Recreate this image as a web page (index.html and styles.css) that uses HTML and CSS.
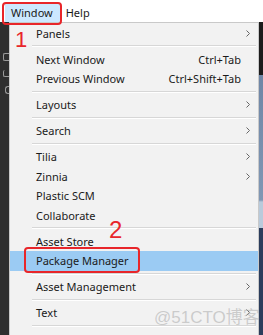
FILE: index.html
```html
<!DOCTYPE html>
<html>
<head>
    <title>Window menu</title>
    <link rel="stylesheet" href="styles.css">
</head>
<body>
    <div class="screen">
        <div class="menubar">
            <span class="top-item active">Window</span>
            <span class="top-item">Help</span>
        </div>
        <div class="body">
            <div class="side-left">
                <i class="frag frag-a"></i>
                <i class="frag frag-b"></i>
                <i class="frag frag-c"></i>
            </div>
            <div class="menu">
                <div class="item"><span class="label">Panels</span><span class="arrow"><svg width="4" height="7" viewBox="0 0 4 7"><path d="M0.5 0.5 L3.5 3.5 L0.5 6.5" fill="none" stroke="#666" stroke-width="1"/></svg></span></div>
                <div class="sep"></div>
                <div class="item"><span class="label">Next Window</span><span class="shortcut">Ctrl+Tab</span><span class="arrow"></span></div>
                <div class="item"><span class="label">Previous Window</span><span class="shortcut">Ctrl+Shift+Tab</span><span class="arrow"></span></div>
                <div class="sep"></div>
                <div class="item"><span class="label">Layouts</span><span class="arrow"><svg width="4" height="7" viewBox="0 0 4 7"><path d="M0.5 0.5 L3.5 3.5 L0.5 6.5" fill="none" stroke="#666" stroke-width="1"/></svg></span></div>
                <div class="sep"></div>
                <div class="item"><span class="label">Search</span><span class="arrow"><svg width="4" height="7" viewBox="0 0 4 7"><path d="M0.5 0.5 L3.5 3.5 L0.5 6.5" fill="none" stroke="#666" stroke-width="1"/></svg></span></div>
                <div class="sep"></div>
                <div class="item"><span class="label">Tilia</span><span class="arrow"><svg width="4" height="7" viewBox="0 0 4 7"><path d="M0.5 0.5 L3.5 3.5 L0.5 6.5" fill="none" stroke="#666" stroke-width="1"/></svg></span></div>
                <div class="item"><span class="label">Zinnia</span><span class="arrow"><svg width="4" height="7" viewBox="0 0 4 7"><path d="M0.5 0.5 L3.5 3.5 L0.5 6.5" fill="none" stroke="#666" stroke-width="1"/></svg></span></div>
                <div class="item"><span class="label">Plastic SCM</span><span class="arrow"></span></div>
                <div class="item"><span class="label">Collaborate</span><span class="arrow"></span></div>
                <div class="sep"></div>
                <div class="item"><span class="label">Asset Store</span><span class="arrow"></span></div>
                <div class="item selected"><span class="label">Package Manager</span><span class="arrow"></span></div>
                <div class="sep"></div>
                <div class="item"><span class="label">Asset Management</span><span class="arrow"><svg width="4" height="7" viewBox="0 0 4 7"><path d="M0.5 0.5 L3.5 3.5 L0.5 6.5" fill="none" stroke="#666" stroke-width="1"/></svg></span></div>
                <div class="sep"></div>
                <div class="item"><span class="label">Text</span><span class="arrow"><svg width="4" height="7" viewBox="0 0 4 7"><path d="M0.5 0.5 L3.5 3.5 L0.5 6.5" fill="none" stroke="#666" stroke-width="1"/></svg></span></div>
                <div class="sep"></div>
                <div class="item"><span class="label">TextMesh Pro</span><span class="arrow"><svg width="4" height="7" viewBox="0 0 4 7"><path d="M0.5 0.5 L3.5 3.5 L0.5 6.5" fill="none" stroke="#666" stroke-width="1"/></svg></span></div>
            </div>
            <div class="side-right"></div>
        </div>

        <!-- annotations drawn over the screenshot -->
        <div class="mark mark-window"></div>
        <div class="mark mark-package"></div>
        <span class="step step-1">1</span>
        <span class="step step-2">2</span>
        <span class="watermark">@51CTO博客</span>
    </div>
</body>
</html>
```

FILE: styles.css
```css
body {
    margin: 0;
    padding: 0;
    font-family: "Noto Sans", "Liberation Sans", sans-serif;
    font-size: 11px;
    color: #1a1a1a;
    background-color: #fff;
}
.screen {
    position: relative;
    width: 263px;
    height: 335px;
    overflow: hidden;
}
.menubar {
    display: flex;
    height: 22px;
    padding: 3px 0 0 5px;
    box-sizing: border-box;
    background-color: #fff;
}
.top-item {
    height: 19px;
    line-height: 19px;
    padding: 0 6px;
}
.top-item.active {
    background-color: #cce8ff;
    padding: 0 7px 0 6px;
}
.body {
    display: flex;
    height: 313px;
}
.side-left {
    width: 9px;
    background-color: #2e2e2e;
    display: flex;
    flex-direction: column;
    align-items: flex-end;
    padding-top: 31px;
    gap: 9px;
    overflow: hidden;
}
.frag {
    display: block;
    width: 5px;
    height: 6px;
    border: 1px solid #9a9a9a;
    border-right: none;
    border-radius: 2px 0 0 2px;
}
.frag-b {
    border-top: none;
}
.frag-c {
    width: 3px;
    border-radius: 3px 0 0 3px;
}
.menu {
    width: 250px;
    background-color: #f2f2f2;
    border: 1px solid #c9c9c9;
    border-bottom: none;
    box-sizing: border-box;
    padding-top: 0.5px;
}
.side-right {
    flex: 1;
    background: linear-gradient(#1c1c1c 0, #1c1c1c 53px, #6f86a6 53px, #8097b4 178px, #b9cadb 180px, #b9cadb 206px, #2b3d5c 206px);
}
.item {
    display: flex;
    align-items: center;
    height: 19.5px;
    padding-left: 26px;
}
.item.selected {
    background-color: #9bcbf3;
}
.label {
    flex: 1;
    white-space: nowrap;
}
.shortcut {
    white-space: nowrap;
}
.arrow {
    width: 17px;
    display: flex;
    align-items: center;
    padding-left: 5px;
    box-sizing: border-box;
}
.sep {
    height: 6.5px;
    display: flex;
    align-items: center;
    margin: 0 2px 0 22px;
}
.sep::before {
    content: "";
    flex: 1;
    height: 1px;
    background-color: #d7d7d7;
    border-bottom: 1px solid #fff;
}
.mark {
    position: absolute;
    border: 2.5px solid #e8262a;
    border-radius: 4px;
    box-sizing: border-box;
}
.mark-window {
    left: 2px;
    top: 2px;
    width: 60px;
    height: 23px;
}
.mark-package {
    left: 24px;
    top: 247px;
    width: 116px;
    height: 26px;
}
.step {
    position: absolute;
    font-family: "Liberation Sans", sans-serif;
    color: #e8262a;
    line-height: 1;
}
.step-1 {
    left: 15px;
    top: 29px;
    font-size: 22px;
}
.step-2 {
    left: 109px;
    top: 218px;
    font-size: 24px;
}
.watermark {
    position: absolute;
    left: 154px;
    top: 303px;
    font-family: "Liberation Sans", "Noto Sans CJK SC", sans-serif;
    font-size: 17px;
    color: rgba(170, 170, 170, 0.55);
    white-space: nowrap;
}
```
